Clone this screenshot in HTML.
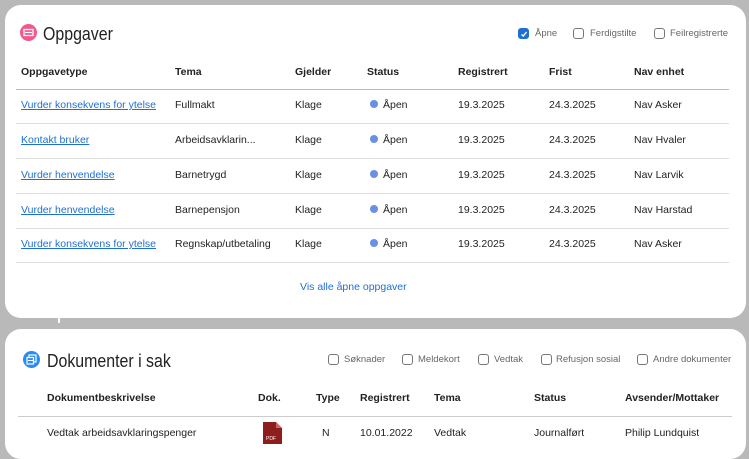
<!DOCTYPE html>
<html><head><meta charset="utf-8"><style>
*{margin:0;padding:0;box-sizing:border-box}
body{width:749px;height:447px;background:#b9b9b9;font-family:"Liberation Sans",sans-serif;position:relative;overflow:hidden;color:#222}
.card{position:absolute;background:#fff;border-radius:16px}
.t{position:absolute;white-space:nowrap;font-size:10.5px}
.h{font-weight:bold;font-size:10.5px}
.a{color:#1f6fd1;text-decoration:underline}
.line{position:absolute;height:1px;background:#ddd}
.cb{position:absolute;width:11px;height:11px;border:1px solid #777;border-radius:3px;background:#fff}
.cl{position:absolute;font-size:9.5px;color:#666;white-space:nowrap}
.dot{display:inline-block;width:8px;height:8px;border-radius:50%;background:#6b8fe6;margin-right:5px;vertical-align:-0px}
.ti{font-size:18.5px;transform:scaleX(0.86);transform-origin:left}
</style></head><body>
<div class="card" style="left:5px;top:5px;width:741px;height:313px"></div>
<div class="card" style="left:5px;top:329px;width:741px;height:130px"></div>
<div style="position:absolute;left:58px;top:316px;width:2px;height:7px;background:#fff"></div>

<svg style="position:absolute;left:20px;top:24px" width="17" height="17"><circle cx="8.5" cy="8.5" r="8.5" fill="#f2588a"/><rect x="4" y="5.5" width="9" height="6" fill="none" stroke="#fff" stroke-width="1.3"/><line x1="5" y1="8.5" x2="12" y2="8.5" stroke="#fff" stroke-width="1.2"/></svg>
<div class="t ti" style="left:43px;top:23px">Oppgaver</div>

<div class="cb" style="left:518px;top:28px;background:#1f6fd1;border-color:#1f6fd1"></div>
<svg style="position:absolute;left:520px;top:30px" width="8" height="8"><path d="M1.5 4.5 L3.3 6 L6.5 2" stroke="#fff" stroke-width="1.4" fill="none"/></svg>
<div class="cl" style="left:535px;top:28px">Åpne</div>
<div class="cb" style="left:573px;top:28px"></div><div class="cl" style="left:590px;top:28px">Ferdigstilte</div>
<div class="cb" style="left:654px;top:28px"></div><div class="cl" style="left:670px;top:28px">Feilregistrerte</div>

<div class="t h" style="left:21px;top:66px">Oppgavetype</div>
<div class="t h" style="left:175px;top:66px">Tema</div>
<div class="t h" style="left:295px;top:66px">Gjelder</div>
<div class="t h" style="left:367px;top:66px">Status</div>
<div class="t h" style="left:458px;top:66px">Registrert</div>
<div class="t h" style="left:549px;top:66px">Frist</div>
<div class="t h" style="left:634px;top:66px">Nav enhet</div>
<div class="line" style="left:16px;top:89px;width:713px;background:#bbb"></div>

<div class="t a" style="left:21px;top:99px">Vurder konsekvens for ytelse</div><div class="t" style="left:175px;top:99px">Fullmakt</div><div class="t" style="left:295px;top:99px">Klage</div><div class="t" style="left:370px;top:99px"><span class="dot"></span>Åpen</div><div class="t" style="left:458px;top:99px">19.3.2025</div><div class="t" style="left:549px;top:99px">24.3.2025</div><div class="t" style="left:634px;top:99px">Nav Asker</div>
<div class="line" style="left:16px;top:123px;width:713px"></div>
<div class="t a" style="left:21px;top:134px">Kontakt bruker</div><div class="t" style="left:175px;top:134px">Arbeidsavklarin...</div><div class="t" style="left:295px;top:134px">Klage</div><div class="t" style="left:370px;top:134px"><span class="dot"></span>Åpen</div><div class="t" style="left:458px;top:134px">19.3.2025</div><div class="t" style="left:549px;top:134px">24.3.2025</div><div class="t" style="left:634px;top:134px">Nav Hvaler</div>
<div class="line" style="left:16px;top:158px;width:713px"></div>
<div class="t a" style="left:21px;top:169px">Vurder henvendelse</div><div class="t" style="left:175px;top:169px">Barnetrygd</div><div class="t" style="left:295px;top:169px">Klage</div><div class="t" style="left:370px;top:169px"><span class="dot"></span>Åpen</div><div class="t" style="left:458px;top:169px">19.3.2025</div><div class="t" style="left:549px;top:169px">24.3.2025</div><div class="t" style="left:634px;top:169px">Nav Larvik</div>
<div class="line" style="left:16px;top:193px;width:713px"></div>
<div class="t a" style="left:21px;top:204px">Vurder henvendelse</div><div class="t" style="left:175px;top:204px">Barnepensjon</div><div class="t" style="left:295px;top:204px">Klage</div><div class="t" style="left:370px;top:204px"><span class="dot"></span>Åpen</div><div class="t" style="left:458px;top:204px">19.3.2025</div><div class="t" style="left:549px;top:204px">24.3.2025</div><div class="t" style="left:634px;top:204px">Nav Harstad</div>
<div class="line" style="left:16px;top:228px;width:713px"></div>
<div class="t a" style="left:21px;top:238px">Vurder konsekvens for ytelse</div><div class="t" style="left:175px;top:238px">Regnskap/utbetaling</div><div class="t" style="left:295px;top:238px">Klage</div><div class="t" style="left:370px;top:238px"><span class="dot"></span>Åpen</div><div class="t" style="left:458px;top:238px">19.3.2025</div><div class="t" style="left:549px;top:238px">24.3.2025</div><div class="t" style="left:634px;top:238px">Nav Asker</div>
<div class="line" style="left:16px;top:262px;width:713px"></div>
<div class="t" style="left:300px;top:281px;color:#1f6fd1">Vis alle åpne oppgaver</div>

<svg style="position:absolute;left:23px;top:351px" width="17" height="17"><circle cx="8.5" cy="8.5" r="8.5" fill="#2a8cf0"/><rect x="6" y="4" width="7" height="7" fill="none" stroke="#fff" stroke-width="1.2"/><rect x="4" y="6.5" width="6.5" height="6.5" fill="#2a8cf0" stroke="#fff" stroke-width="1.2"/><line x1="5" y1="9.5" x2="10" y2="9.5" stroke="#fff"/></svg>
<div class="t ti" style="left:47px;top:350px">Dokumenter i sak</div>

<div class="cb" style="left:328px;top:354px"></div><div class="cl" style="left:344px;top:354px">Søknader</div>
<div class="cb" style="left:402px;top:354px"></div><div class="cl" style="left:418px;top:354px">Meldekort</div>
<div class="cb" style="left:478px;top:354px"></div><div class="cl" style="left:494px;top:354px">Vedtak</div>
<div class="cb" style="left:541px;top:354px"></div><div class="cl" style="left:556px;top:354px">Refusjon sosial</div>
<div class="cb" style="left:637px;top:354px"></div><div class="cl" style="left:653px;top:354px">Andre dokumenter</div>

<div class="t h" style="left:47px;top:392px">Dokumentbeskrivelse</div>
<div class="t h" style="left:258px;top:392px">Dok.</div>
<div class="t h" style="left:316px;top:392px">Type</div>
<div class="t h" style="left:360px;top:392px">Registrert</div>
<div class="t h" style="left:434px;top:392px">Tema</div>
<div class="t h" style="left:534px;top:392px">Status</div>
<div class="t h" style="left:625px;top:392px">Avsender/Mottaker</div>
<div class="line" style="left:18px;top:416px;width:714px;background:#ccc"></div>
<div class="t" style="left:47px;top:427px">Vedtak arbeidsavklaringspenger</div>
<svg style="position:absolute;left:263px;top:422px" width="19" height="22"><path d="M0 0 H13 L19 6 V22 H0 Z" fill="#8e1e1e"/><path d="M13 0 V6 H19" fill="#c66"/><text x="3" y="18" font-size="5" fill="#fff" font-family="Liberation Sans">PDF</text></svg>
<div class="t" style="left:322px;top:427px">N</div>
<div class="t" style="left:360px;top:427px">10.01.2022</div>
<div class="t" style="left:434px;top:427px">Vedtak</div>
<div class="t" style="left:534px;top:427px">Journalført</div>
<div class="t" style="left:625px;top:427px">Philip Lundquist</div>
</body></html>
